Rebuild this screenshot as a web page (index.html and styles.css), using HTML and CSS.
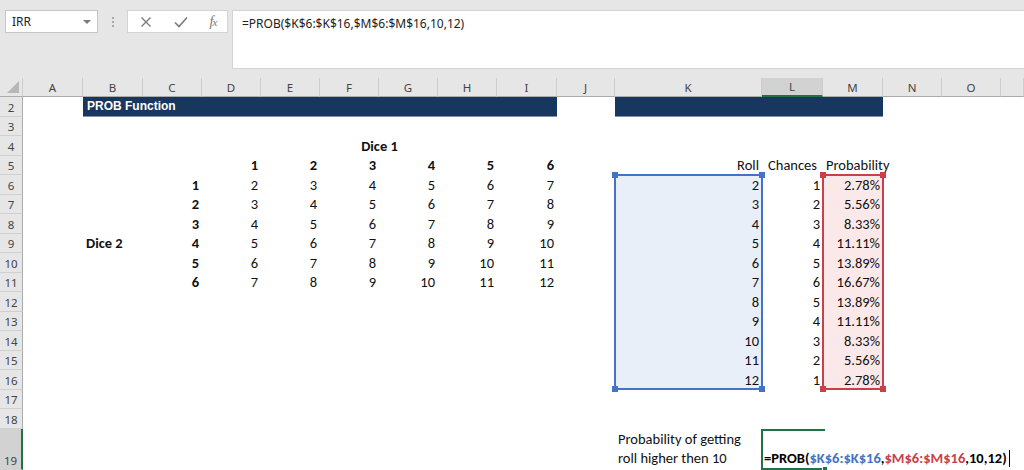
FILE: index.html
```html
<!DOCTYPE html>
<html lang="en">
<head>
    <meta charset="UTF-8">
    <meta name="viewport" content="width=device-width, initial-scale=1.0">
    <title>PROB Function</title>
    <link rel="stylesheet" href="styles.css">
</head>
<body>
    <div class="toolbar">
        <div class="name-box">
            <span>IRR</span>
            <span class="arrow"></span>
        </div>
        <div class="grip"></div>
        <div class="fx-buttons">
            <svg class="icon" width="12" height="12" viewBox="0 0 12 12">
                <path d="M1.5 1.5 L10.5 10.5 M10.5 1.5 L1.5 10.5" stroke="#7a7a7a" stroke-width="1.4" fill="none"/>
            </svg>
            <svg class="icon" width="14" height="12" viewBox="0 0 14 12">
                <path d="M1 6.5 L5 10.5 L13 1.5" stroke="#7a7a7a" stroke-width="1.6" fill="none"/>
            </svg>
            <span class="fx"><i>f</i><span class="fx-x">x</span></span>
        </div>
        <div class="formula-bar">=PROB($K$6:$K$16,$M$6:$M$16,10,12)</div>
    </div>

    <div class="sheet" id="sheet">
        <div class="corner">
            <svg width="12" height="12" viewBox="0 0 12 12">
                <polygon points="12,0 12,12 0,12" fill="#b7b7b7"/>
            </svg>
        </div>

        <div class="title title-main">PROB Function</div>
        <div class="title title-side"></div>

        <div class="range range-k">
            <span class="handle tl"></span><span class="handle tr"></span>
            <span class="handle bl"></span><span class="handle br"></span>
        </div>
        <div class="range range-m">
            <span class="handle tl"></span><span class="handle tr"></span>
            <span class="handle bl"></span><span class="handle br"></span>
        </div>

        <div class="cell note">Probability of getting<br>roll higher then 10</div>
        <div class="cell active">
            <span class="edit">=PROB(<span class="ref-k">$K$6:$K$16</span>,<span class="ref-m">$M$6:$M$16</span>,10,12)<span class="caret"></span></span>
            <span class="fill-handle"></span>
        </div>
    </div>

    <script>
        const letters = 'ABCDEFGHIJKLMNOP';
        const sheet = document.getElementById('sheet');

        function colOf(ref) {
            return letters.indexOf(ref[0]) + 2;
        }

        function rowOf(ref) {
            return parseInt(ref.slice(1), 10);
        }

        function addCell(ref, text, classes, endRef) {
            const el = document.createElement('div');
            el.className = 'cell ' + (classes || '');
            el.textContent = text;
            el.style.gridRow = rowOf(ref);
            el.style.gridColumn = endRef ? colOf(ref) + ' / ' + (colOf(endRef) + 1) : colOf(ref);
            sheet.appendChild(el);
        }

        // Column headers
        for (let i = 0; i < letters.length; i++) {
            const head = document.createElement('div');
            head.className = 'colhead' + (letters[i] === 'L' ? ' selected' : '');
            head.textContent = letters[i] === 'P' ? '' : letters[i];
            head.style.gridColumn = i + 2;
            sheet.appendChild(head);
        }

        // Row headers (row 1 is hidden)
        for (let r = 2; r <= 19; r++) {
            const head = document.createElement('div');
            head.className = 'rowhead' + (r === 19 ? ' selected' : '');
            head.textContent = r;
            head.style.gridRow = r;
            sheet.appendChild(head);
        }

        // Dice table
        addCell('D4', 'Dice 1', 'c b', 'I4');
        addCell('B9', 'Dice 2', 'b');
        for (let i = 1; i <= 6; i++) {
            addCell(letters[2 + i] + '5', i, 'r b');
            addCell('C' + (5 + i), i, 'r b');
            for (let j = 1; j <= 6; j++) {
                addCell(letters[2 + j] + (5 + i), i + j, 'r');
            }
        }

        // Roll / chances / probability
        addCell('K5', 'Roll', 'r');
        addCell('L5', 'Chances', 'c');
        addCell('M5', 'Probability', '');
        const chances = [1, 2, 3, 4, 5, 6, 5, 4, 3, 2, 1];
        chances.forEach((c, i) => {
            addCell('K' + (6 + i), i + 2, 'r');
            addCell('L' + (6 + i), c, 'r');
            addCell('M' + (6 + i), (c / 36 * 100).toFixed(2) + '%', 'r');
        });
    </script>
</body>
</html>
```

FILE: styles.css
```css
* {
    margin: 0;
    padding: 0;
    box-sizing: border-box;
}

body {
    width: 1024px;
    height: 470px;
    overflow: hidden;
    background: #ffffff;
    font-family: "Carlito", "Lato", sans-serif;
}

/* Formula bar area */

.toolbar {
    height: 78px;
    background: #e6e6e6;
    display: flex;
    align-items: flex-start;
    padding: 10px 0 0 5px;
}

.name-box {
    width: 93px;
    height: 23px;
    background: #ffffff;
    border: 1px solid #c6c6c6;
    display: flex;
    align-items: center;
    justify-content: space-between;
    padding: 0 6px 0 6px;
    font-family: "Noto Sans", sans-serif;
    font-size: 12px;
    color: #222222;
}

.arrow {
    width: 0;
    height: 0;
    border-left: 4px solid transparent;
    border-right: 4px solid transparent;
    border-top: 4px solid #7a7a7a;
}

.grip {
    width: 2px;
    height: 10px;
    margin: 7px 13px 0 14px;
    border-left: 2px dotted #a8a8a8;
}

.fx-buttons {
    width: 101px;
    height: 23px;
    background: #ffffff;
    border: 1px solid #d4d4d4;
    display: grid;
    grid-template-columns: 34px 35px 30px;
    align-items: center;
    justify-items: center;
    padding-left: 1px;
}

.fx {
    font-family: "Liberation Serif", serif;
    font-size: 14px;
    color: #7a7a7a;
    letter-spacing: -1px;
}

.fx-x {
    font-style: italic;
    font-size: 11px;
}

.formula-bar {
    flex: 1;
    height: 59px;
    margin-left: 4px;
    background: #ffffff;
    border: 1px solid #d4d4d4;
    border-right: none;
    padding: 4px 9px;
    font-family: "Noto Sans", sans-serif;
    font-size: 12px;
    color: #222222;
}

/* Sheet grid */

.sheet {
    display: grid;
    grid-template-columns: 23px 60px 60px 59px 59px 59px 59px 59px 59px 60px 58px 147px 61px 60px 59px 59px 23px;
    grid-template-rows: 19px repeat(17, 19.5px) 41px;
}

.corner {
    grid-row: 1;
    grid-column: 1;
    background: #e6e6e6;
    border-right: 1px solid #cdcdcd;
    border-bottom: 1px solid #ababab;
    display: flex;
    align-items: flex-end;
    justify-content: flex-end;
    padding: 0 3px 3px 0;
}

.colhead {
    grid-row: 1;
    background: #e6e6e6;
    border-right: 1px solid #cdcdcd;
    border-bottom: 1px solid #ababab;
    display: flex;
    align-items: center;
    justify-content: center;
    font-family: "Noto Sans", sans-serif;
    font-size: 11.5px;
    color: #444444;
}

.colhead.selected {
    background: #d2d2d2;
    border-bottom: 2px solid #217346;
}

.rowhead {
    grid-column: 1;
    background: #e6e6e6;
    border-right: 1px solid #ababab;
    border-bottom: 1px solid #d0d0d0;
    display: flex;
    align-items: flex-end;
    justify-content: center;
    padding-bottom: 1px;
    font-family: "Noto Sans", sans-serif;
    font-size: 11.5px;
    color: #444444;
}

.rowhead.selected {
    background: #d2d2d2;
    border-right: 2px solid #217346;
}

.cell {
    position: relative;
    display: flex;
    align-items: flex-end;
    padding: 0 3px 1px 3px;
    font-size: 14.5px;
    color: #111111;
    white-space: nowrap;
}

.r {
    justify-content: flex-end;
}

.c {
    justify-content: center;
}

.b {
    font-weight: bold;
}

.title {
    grid-row: 2;
    background: #17375e;
    border-bottom: 1px solid #7f93ad;
}

.title-main {
    grid-column: 3 / 11;
    display: flex;
    align-items: center;
    padding-left: 4px;
    font-family: "Liberation Sans", Arial, sans-serif;
    font-weight: bold;
    font-size: 12px;
    color: #ffffff;
}

.title-side {
    grid-column: 12 / 15;
}

/* Highlighted formula ranges */

.range {
    position: relative;
    grid-row: 6 / 17;
    margin: -1px -1px 0 -1px;
    border: 2px solid;
}

.range-k {
    grid-column: 12;
    background: #e9eff9;
    border-color: #4472c4;
    color: #4472c4;
}

.range-m {
    grid-column: 14;
    background: #fbe9ea;
    border-color: #c9404a;
    color: #c9404a;
}

.handle {
    position: absolute;
    width: 6px;
    height: 6px;
    background: currentColor;
}

.handle.tl { top: -4px; left: -4px; }
.handle.tr { top: -4px; right: -4px; }
.handle.bl { bottom: -4px; left: -4px; }
.handle.br { bottom: -4px; right: -4px; }

/* Row 19 */

.note {
    grid-row: 19;
    grid-column: 12;
    white-space: normal;
    line-height: 19px;
    padding-bottom: 2px;
}

.active {
    grid-row: 19;
    grid-column: 13;
    z-index: 2;
    margin-left: -1px;
    margin-right: -2px;
    border: 2px solid #217346;
    border-right: none;
    padding: 0 0 1px 1px;
}

.edit {
    font-weight: bold;
    color: #000000;
    display: flex;
    align-items: flex-end;
}

.ref-k {
    color: #4472c4;
}

.ref-m {
    color: #c9404a;
}

.caret {
    width: 1px;
    height: 17px;
    margin: 0 0 0 2px;
    background: #000000;
}

.fill-handle {
    position: absolute;
    right: -3px;
    bottom: -4px;
    width: 6px;
    height: 6px;
    background: #217346;
    border: 1px solid #ffffff;
}
```
